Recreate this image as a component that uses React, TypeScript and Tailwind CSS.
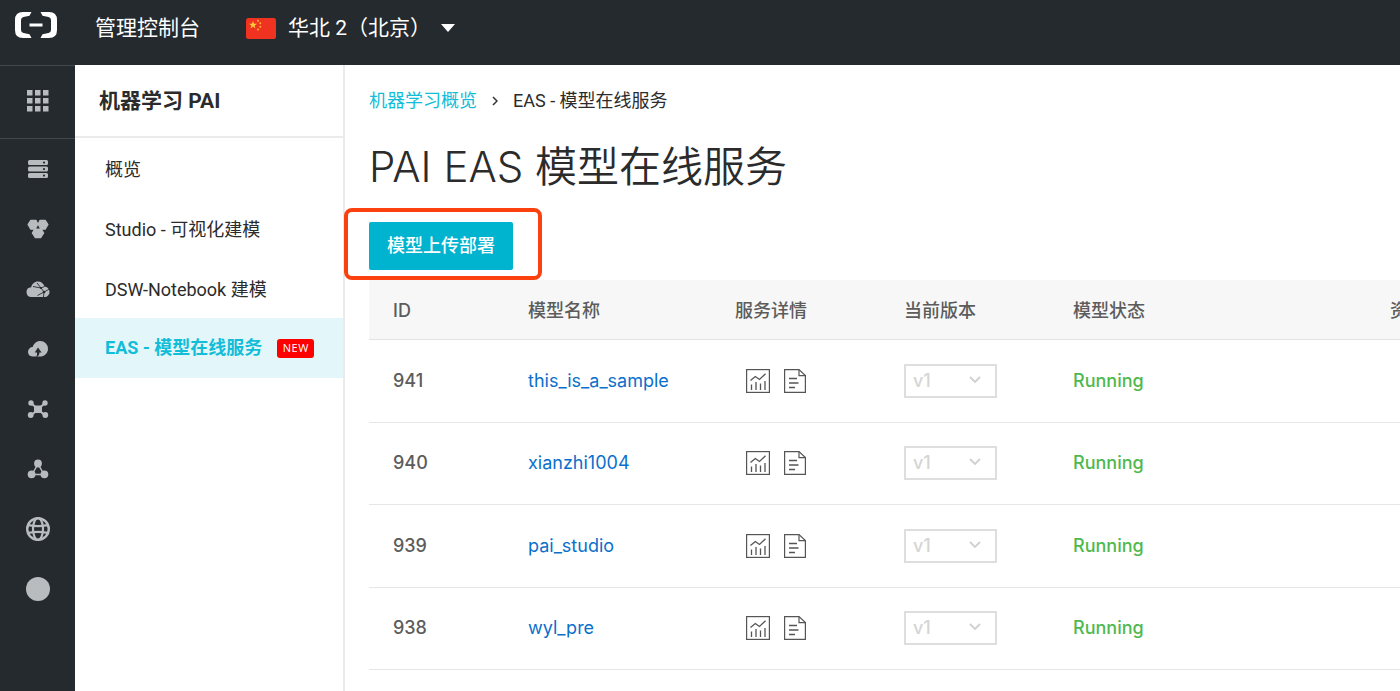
import type { ReactNode } from "react";

type Model = { id: number; name: string };

const models: Model[] = [
  { id: 941, name: "this_is_a_sample" },
  { id: 940, name: "xianzhi1004" },
  { id: 939, name: "pai_studio" },
  { id: 938, name: "wyl_pre" },
];

const navItems = [
  { label: "概览", active: false },
  { label: "Studio - 可视化建模", active: false },
  { label: "DSW-Notebook 建模", active: false },
  { label: "EAS - 模型在线服务", active: true },
];

function Icon({ children }: { children: ReactNode }) {
  return (
    <svg viewBox="0 0 24 24" className="size-6" fill="currentColor" aria-hidden="true">
      {children}
    </svg>
  );
}

const railIcons: { label: string; icon: ReactNode }[] = [
  {
    label: "云服务器",
    icon: (
      <Icon>
        <path
          fillRule="evenodd"
          d="M3.500 3h17a1.500 1.500 0 0 1 1.500 1.500v2a1.500 1.500 0 0 1-1.500 1.500h-17A1.500 1.500 0 0 1 2 6.500v-2A1.500 1.500 0 0 1 3.500 3zM18 4.500a1.100 1.100 0 1 0 0 2.200 1.100 1.100 0 0 0 0-2.200zM3.500 9.500h17a1.500 1.500 0 0 1 1.500 1.500v2a1.500 1.500 0 0 1-1.500 1.500h-17A1.500 1.500 0 0 1 2 13v-2a1.500 1.500 0 0 1 1.500-1.500zM18 11a1.100 1.100 0 1 0 0 2.200 1.100 1.100 0 0 0 0-2.200zM3.500 16h17a1.500 1.500 0 0 1 1.500 1.500v2a1.500 1.500 0 0 1-1.500 1.500h-17A1.500 1.500 0 0 1 2 19.500v-2A1.500 1.500 0 0 1 3.500 16zM18 17.500a1.100 1.100 0 1 0 0 2.200 1.100 1.100 0 0 0 0-2.200z"
        />
      </Icon>
    ),
  },
  {
    label: "容器集群",
    icon: (
      <Icon>
        <g stroke="currentColor" strokeWidth="1.200" strokeLinejoin="round">
          <path d="M4.800 3.300h5.200l2 4.200-2 4.700H4.800L2 7.500z" />
          <path d="M14 3.300h5.200L22 7.500l-2.800 4.700H14l-2-4.700z" />
          <path d="M9.300 11h5.400l3 5-3 4.600H9.300l-3-4.600z" />
        </g>
        <path d="M12 8.300l1.800 3.200h-3.600z" fill="#252a2f" />
      </Icon>
    ),
  },
  {
    label: "云网络",
    icon: (
      <Icon>
        <path d="M5.300 20A5 5 0 0 1 .5 15.200a5 5 0 0 1 4.700-4.900C5.800 7 8.500 4.500 12 4.500c3.200 0 5.700 2 6.500 5a5.400 5.400 0 0 1 5 5.500c0 2.900-2.200 5-5 5z" />
        <g stroke="#252a2f" strokeWidth="0.900" fill="none">
          <path d="M7 9.500l8 1.500 3.500-1.500M15 11l3 4 5.500-3M18 15l-.5 5M11.500 18.500l6.500-3.500M11 6l4 5" />
        </g>
        <circle cx="18" cy="15" r="1.300" fill="#252a2f" />
        <circle cx="15" cy="11" r="1" fill="#252a2f" />
      </Icon>
    ),
  },
  {
    label: "云上传",
    icon: (
      <Icon>
        <path d="M6.500 19.500A4.800 4.800 0 0 1 2 14.800a4.800 4.800 0 0 1 4.700-4.700C7.600 6.600 10.500 4 14.300 4A7.700 7.700 0 0 1 22 11.700c0 4.500-3.500 7.800-8 7.800z" />
        <path d="M12 10.500l3.600 5h-2.200c.1 2-.9 3.700-3.400 4.500 1-1.500 1.200-2.800 1-4.500H8.700z" fill="#252a2f" />
      </Icon>
    ),
  },
  {
    label: "网络拓扑",
    icon: (
      <Icon>
        <path d="M5 6l14 12.500M19 6L5 18.500" stroke="currentColor" strokeWidth="2" />
        <circle cx="5" cy="6" r="2.700" />
        <circle cx="19" cy="6" r="2.700" />
        <circle cx="4.700" cy="18" r="2.900" />
        <circle cx="19.300" cy="18" r="2.900" />
        <rect x="8" y="8.500" width="8" height="7.500" rx="1.500" />
      </Icon>
    ),
  },
  {
    label: "负载均衡",
    icon: (
      <Icon>
        <path d="M12 7L6 17.500h12z" stroke="currentColor" strokeWidth="1.500" fill="none" />
        <circle cx="12" cy="6.500" r="3.900" />
        <circle cx="5.600" cy="17.300" r="3.900" />
        <circle cx="18.400" cy="17.300" r="3.900" />
      </Icon>
    ),
  },
  {
    label: "域名",
    icon: (
      <Icon>
        <g fill="none" stroke="currentColor" strokeWidth="2.200">
          <circle cx="12" cy="12" r="10.800" strokeWidth="2.400" />
          <ellipse cx="12" cy="12" rx="5" ry="11" />
          <path d="M2.500 8.200q9.500 2 19 0M2.500 15.800q9.500-2 19 0" />
        </g>
      </Icon>
    ),
  },
  {
    label: "更多",
    icon: (
      <Icon>
        <circle cx="12" cy="12" r="12" />
      </Icon>
    ),
  },
];

function Logo() {
  return (
    <svg viewBox="0 0 42 26" className="h-[26px] w-[42px]" fill="#fff" aria-hidden="true">
      <path d="M16.500 0H8Q0 0 0 8v10q0 8 8 8h8.500l-2-3.700-6-1.300Q6 20.500 6 18V8q0-2.500 2.500-3l6-1.300z" />
      <path d="M25.500 0H34q8 0 8 8v10q0 8-8 8h-8.500l2-3.700 6-1.300q2.500-.5 2.500-3V8q0-2.500-2.500-3l-6-1.300z" />
      <rect x="14.500" y="11.500" width="13" height="3" />
    </svg>
  );
}

function Flag() {
  return (
    <svg viewBox="0 0 30 21" className="h-[21px] w-[30px]" aria-hidden="true">
      <rect width="30" height="21" rx="2.500" fill="#f03320" />
      <path
        d="M7 3l1 2.800h3L8.600 7.500l.9 2.900L7 8.600l-2.500 1.800.9-2.900L3 5.800h3z"
        fill="#ffcf3a"
      />
      <g fill="#ffb52e">
        <circle cx="12" cy="2.800" r="1" />
        <circle cx="14.300" cy="5.300" r="1" />
        <circle cx="14.300" cy="8.800" r="1" />
        <circle cx="12" cy="11.500" r="1" />
      </g>
    </svg>
  );
}

function ChartIcon() {
  return (
    <svg viewBox="0 0 24 24" className="size-6" fill="none" stroke="#555" aria-hidden="true">
      <rect x=".6" y=".6" width="22.800" height="22.800" strokeWidth="1.200" />
      <path d="M5.500 21v-5.500M10 21v-8M14.500 21v-6.500M19 21v-9" strokeWidth="1.300" />
      <path d="M4.500 11.500l4.800-4 4.200 3 6-5.700" strokeWidth="1.300" />
    </svg>
  );
}

function DocumentIcon() {
  return (
    <svg viewBox="0 0 22 24" className="h-6 w-[22px]" fill="none" stroke="#555" aria-hidden="true">
      <path d="M.6.600h14.400l6.400 6v16.800H.6z" strokeWidth="1.200" />
      <path d="M15 .6v6h6.400" strokeWidth="1.200" />
      <path d="M5 9.500h8M5 14h9.500M5 18.500h6" strokeWidth="1.400" />
    </svg>
  );
}

function VersionSelect({ id }: { id: number }) {
  return (
    <div className="relative w-[93px]">
      <select
        disabled
        aria-label={`${id} 当前版本`}
        className="block h-[34px] w-full appearance-none border-2 border-[#dedede] bg-white px-[7px] text-[18px] leading-6 text-[#d5d5d5] opacity-100"
      >
        <option>v1</option>
      </select>
      <svg
        viewBox="0 0 12 8"
        className="pointer-events-none absolute top-3 right-4 h-2 w-3"
        fill="none"
        stroke="#d0d0d0"
        strokeWidth="1.800"
        aria-hidden="true"
      >
        <path d="M1 1l5 5 5-5" />
      </svg>
    </div>
  );
}

export default function App() {
  return (
    <div className="flex min-h-screen flex-col bg-white font-[Roboto,'Noto_Sans_CJK_SC',sans-serif] text-[18px] leading-7 text-[#2b2b2b]">
      <header className="flex h-[65px] items-start bg-[#252a2f] text-[21px] text-white">
        <a href="#home" aria-label="首页" className="flex w-[75px] justify-start pt-3 pl-[15px]">
          <Logo />
        </a>
        <a href="#console" className="ml-5 pt-[14px]">
          管理控制台
        </a>
        <button type="button" className="ml-[46px] flex items-center pt-[14px]">
          <Flag />
          <span className="ml-3">华北 2（北京）</span>
          <svg viewBox="0 0 14 8" className="ml-[10px] h-2 w-[14px]" fill="#fff" aria-hidden="true">
            <path d="M0 0h14L7 8z" />
          </svg>
        </button>
      </header>

      <div className="flex flex-1">
        <nav aria-label="产品" className="flex w-[75px] shrink-0 flex-col bg-[#252a2f] text-[#b9bcbe]">
          <button
            type="button"
            aria-label="全部产品"
            className="flex h-[74px] items-center justify-center border-y border-[#43484c] pb-[2px]"
          >
            <svg viewBox="0 0 22 22" className="size-[22px]" fill="currentColor" aria-hidden="true">
              <path d="M0 0h5.500v5.500H0zM8 0h5.500v5.500H8zM16 0h5.500v5.500H16zM0 8h5.500v5.500H0zM8 8h5.500v5.500H8zM16 8h5.500v5.500H16zM0 16h5.500v5.500H0zM8 16h5.500v5.500H8zM16 16h5.500v5.500H16z" />
            </svg>
          </button>
          {railIcons.map((item) => (
            <a
              key={item.label}
              href="#product"
              aria-label={item.label}
              className="flex h-[60px] items-center justify-center"
            >
              {item.icon}
            </a>
          ))}
        </nav>

        <aside className="w-[270px] shrink-0 border-r-2 border-[#ebebeb]">
          <h2 className="flex h-[73px] items-center border-b-2 border-[#ebebeb] px-6 text-[21px] font-bold">
            机器学习 PAI
          </h2>
          <ul>
            {navItems.map((item) => (
              <li key={item.label}>
                <a
                  href="#nav"
                  aria-current={item.active ? "page" : undefined}
                  className={
                    item.active
                      ? "flex h-[60px] items-center bg-[#e3f7fa] pl-[30px] font-bold text-[#12bdd8]"
                      : "flex h-[60px] items-center pt-[3px] pl-[30px]"
                  }
                >
                  {item.label}
                  {item.active && (
                    <span className="ml-[15px] flex h-[19px] w-[37px] items-center justify-center rounded-[3px] bg-[#ff0000] font-['Open_Sans',sans-serif] text-[11px] font-normal tracking-wider text-white">
                      NEW
                    </span>
                  )}
                </a>
              </li>
            ))}
          </ul>
        </aside>

        <main className="min-w-0 flex-1 pt-[22px] pl-6">
          <nav aria-label="面包屑" className="flex items-center">
            <a href="#overview" className="text-[#12bdd8]">
              机器学习概览
            </a>
            <svg
              viewBox="0 0 6 10"
              className="mx-[15px] h-[10px] w-[6px]"
              fill="none"
              stroke="#333"
              strokeWidth="1.500"
              aria-hidden="true"
            >
              <path d="M1 1l4 4-4 4" />
            </svg>
            <span>EAS - 模型在线服务</span>
          </nav>

          <h1 className="mt-[22px] font-[Inter,'Noto_Sans_CJK_SC',sans-serif] text-[42px] leading-[60px] font-light">
            PAI EAS <span className="font-[350]">模型在线服务</span>
          </h1>

          <div className="relative mt-[25px] w-fit">
            <button
              type="button"
              className="block h-12 rounded-[2px] bg-[#00b3ce] px-[18px] font-medium text-white"
            >
              模型上传部署
            </button>
            <span className="pointer-events-none absolute -top-[14px] -left-[25px] h-[72px] w-[198px] rounded-lg border-4 border-[#fb4110]" />
          </div>

          <div className="mt-[10px] overflow-hidden">
            <table className="w-full min-w-[1197px] table-fixed border-collapse font-[Inter,'Noto_Sans_CJK_SC',sans-serif] font-medium text-[#5c5c5c]">
              <colgroup>
                <col className="w-[135px]" />
                <col className="w-[207px]" />
                <col className="w-[169px]" />
                <col className="w-[169px]" />
                <col className="w-[317px]" />
                <col />
              </colgroup>
              <thead>
                <tr className="h-[59px] border-b border-[#e3e3e3] bg-[#f7f7f7] text-left">
                  <th className="px-6 pt-1 font-medium">ID</th>
                  <th className="px-6 pt-1 font-medium">模型名称</th>
                  <th className="px-6 pt-1 font-medium">服务详情</th>
                  <th className="px-6 pt-1 font-medium">当前版本</th>
                  <th className="px-6 pt-1 font-medium">模型状态</th>
                  <th className="px-6 pt-1 font-medium">资</th>
                </tr>
              </thead>
              <tbody>
                {models.map((model) => (
                  <tr key={model.id} className="border-b border-[#e6e6e6] odd:h-[83px] even:h-[82px]">
                    <td className="px-6">{model.id}</td>
                    <td className="px-6">
                      <a href="#model" className="font-normal text-[#0a70cc]">
                        {model.name}
                      </a>
                    </td>
                    <td className="px-6">
                      <div className="flex gap-[14px] pl-[11px]">
                        <button type="button" aria-label="监控">
                          <ChartIcon />
                        </button>
                        <button type="button" aria-label="日志">
                          <DocumentIcon />
                        </button>
                      </div>
                    </td>
                    <td className="px-6">
                      <VersionSelect id={model.id} />
                    </td>
                    <td className="px-6 text-[#4fb94f]">Running</td>
                    <td className="px-6" />
                  </tr>
                ))}
              </tbody>
            </table>
          </div>
        </main>
      </div>
    </div>
  );
}
